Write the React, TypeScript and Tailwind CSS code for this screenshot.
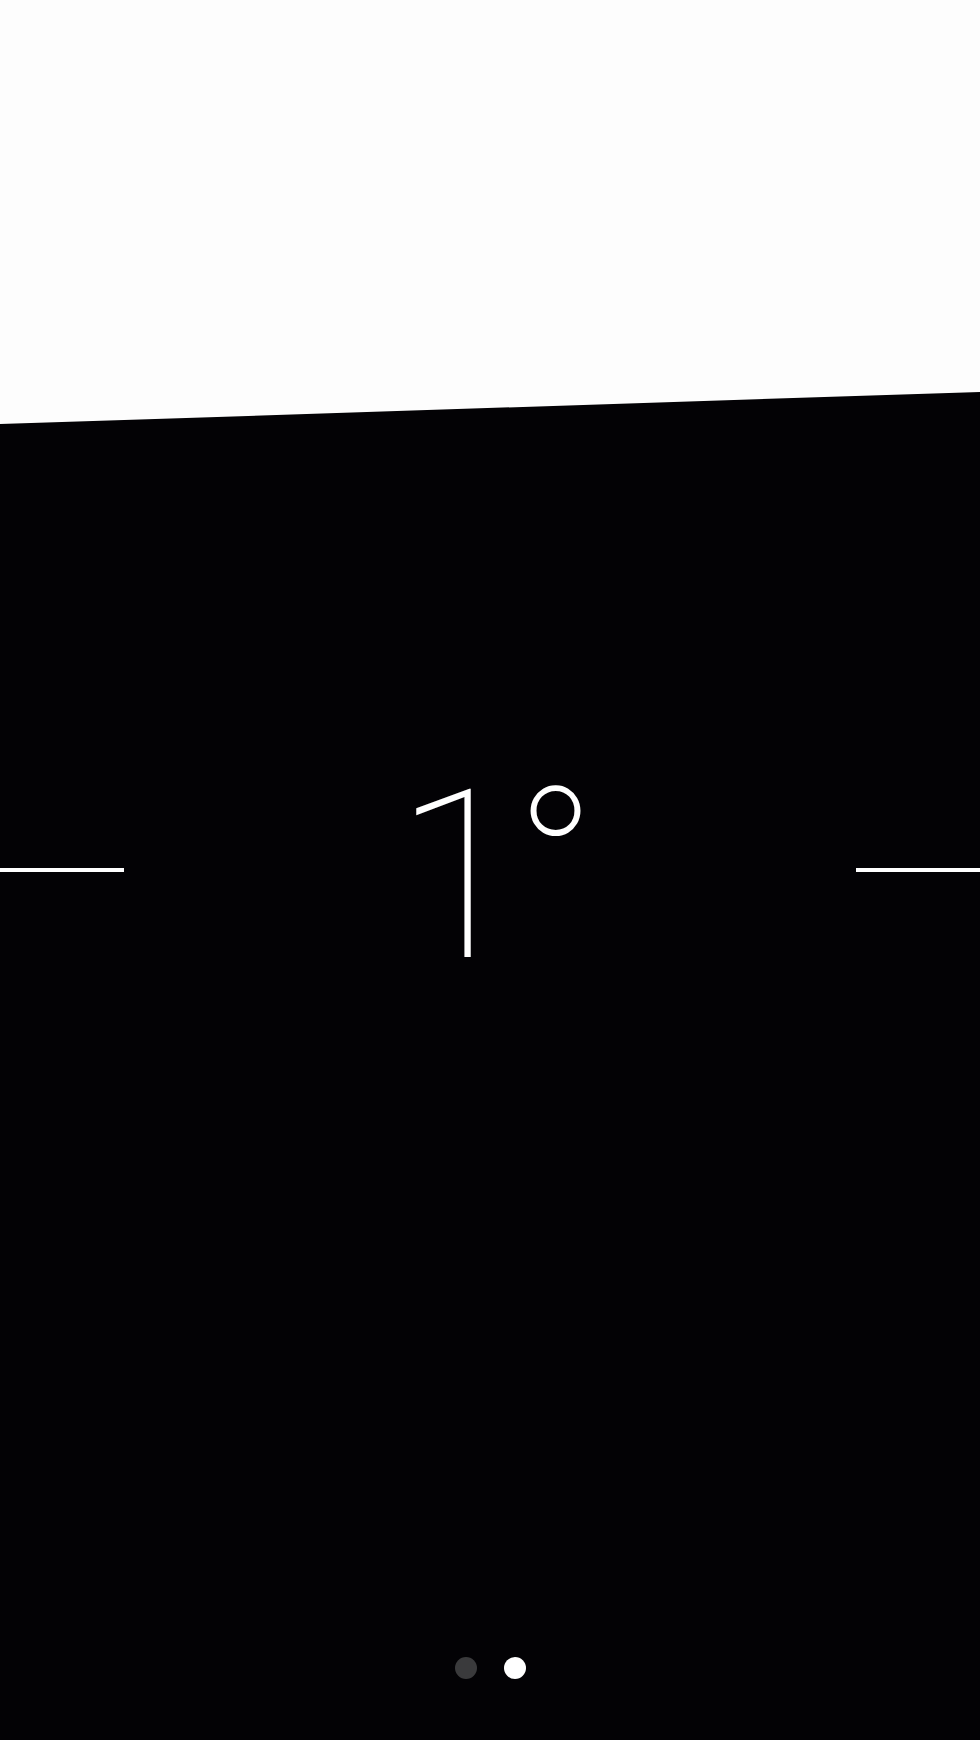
export default function App() {
  return (
    <div className="h-[1740px] w-full bg-[#fdfdfd] overflow-hidden">
      <div className="flex h-[1740px] w-full flex-col bg-[#030205] [clip-path:polygon(0_424px,100%_392px,100%_100%,0_100%)]">
        <div className="mt-[770px] flex h-[200px] items-center">
          <div className="h-[4px] w-[124px] bg-white" />
          <div className="flex flex-1 justify-center">
            <div
              className="mt-[14px] flex items-start pl-[12px] text-white"
              style={{ fontFamily: 'Roboto, "Noto Sans", sans-serif' }}
            >
              <span className="text-[236px] font-thin leading-none tracking-[-10px]">1</span>
              <span className="text-[218px] font-thin leading-none">°</span>
            </div>
          </div>
          <div className="h-[4px] w-[124px] bg-white" />
        </div>
        <div className="mt-auto mb-[61px] flex justify-center gap-[27px]">
          <div className="h-[22px] w-[22px] rounded-full bg-[#3a3a3c]" />
          <div className="h-[22px] w-[22px] rounded-full bg-white" />
        </div>
      </div>
    </div>
  );
}
